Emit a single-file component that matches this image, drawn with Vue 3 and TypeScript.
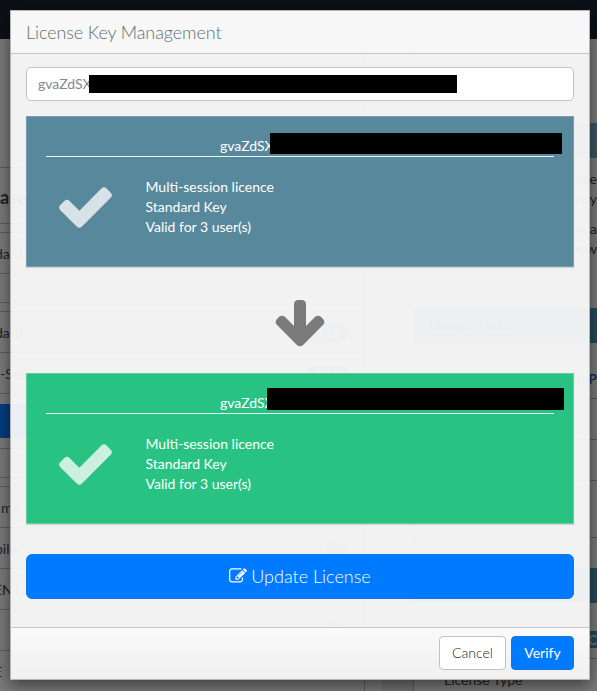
<script setup lang="ts">
interface LicenseCard { tone: string; keyText: string; details: string[] }
interface Row { text: string; height: number; shift: number; kind?: string; badge?: string }

const details = ['Multi-session licence', 'Standard Key', 'Valid for 3 user(s)']
const cards: LicenseCard[] = [
  { tone: 'blue', keyText: 'gvaZdSX', details },
  { tone: 'green', keyText: 'gvaZdSX', details },
]

const rows: Row[] = [
  { text: '', height: 13, shift: 0 },
  { text: 'ase', height: 56, shift: 0, kind: 'title' },
  { text: '', height: 9, shift: 0 },
  { text: 'dard', height: 41, shift: -5 },
  { text: '', height: 29, shift: 0 },
  { text: '', height: 9, shift: 0 },
  { text: 'dard', height: 41, shift: -5, badge: '7 / 10' },
  { text: '-Ses', height: 41, shift: 0, badge: '7 / 8' },
  { text: '', height: 55, shift: 0, kind: 'active' },
  { text: '', height: 29, shift: 0 },
  { text: '', height: 9, shift: 0 },
  { text: 'me', height: 41, shift: 1 },
  { text: 'piler', height: 41, shift: -5, badge: '✓' },
  { text: 'ENT', height: 41, shift: -6 },
  { text: '', height: 41, shift: 0, badge: '✓' },
  { text: 'E', height: 41, shift: -6 },
]
</script>

<template>
  <div class="screen">
    <div class="page">
      <div class="topbar"></div>
      <div class="columns">
        <div class="left">
          <div class="lead"></div>
          <div v-for="(r, i) in rows" :key="i" class="row" :class="r.kind" :style="{ height: r.height + 'px' }">
            <span :style="{ marginLeft: r.shift + 'px' }">{{ r.text }}</span>
            <b v-if="r.badge" :class="{ round: r.badge === '✓' }">{{ r.badge }}</b>
          </div>
        </div>
        <div class="gutter"></div>
        <div class="right">
          <div class="bar muted"></div>
          <div class="copy">
            <p>license</p>
            <p>your sy</p>
            <p class="gap">ase a</p>
            <p>are w</p>
          </div>
          <div class="bar">License Detail</div>
          <div class="cell key">auP</div>
          <div class="cell"></div>
          <div class="cell"></div>
          <div class="cell tall"></div>
          <div class="space"></div>
          <div class="bar"></div>
          <div class="cell status"><span>C</span></div>
          <div class="cell type">License Type</div>
        </div>
      </div>
    </div>

    <div class="backdrop"></div>

    <section class="modal" role="dialog">
      <header class="head">License Key Management</header>
      <main class="body">
        <div class="field">gvaZdSX<i class="mask"></i></div>
        <template v-for="(c, i) in cards" :key="c.tone">
          <article class="card" :class="c.tone">
            <div class="key-line">{{ c.keyText }}<i class="mask"></i></div>
            <div class="info">
              <svg class="check" viewBox="0 0 1792 1792"><path d="M1671 566q0 40-28 68l-724 724-136 136q-28 28-68 28t-68-28l-136-136-362-362q-28-28-28-68t28-68l136-136q28-28 68-28t68 28l294 295 656-657q28-28 68-28t68 28l136 136q28 28 28 68z" /></svg>
              <div class="details"><div v-for="d in c.details" :key="d">{{ d }}</div></div>
            </div>
          </article>
          <div v-if="i === 0" class="arrow">
            <svg viewBox="0 0 1792 1792"><path d="M1675 832q0 53-37 90l-651 652q-39 37-91 37-53 0-90-37l-651-652q-38-36-38-90 0-53 38-91l74-75q39-37 91-37 53 0 90 37l294 294v-704q0-52 38-90t90-38h128q52 0 90 38t38 90v704l294-294q37-37 90-37 52 0 91 37l75 75q37 39 37 91z" /></svg>
          </div>
        </template>
        <button class="update">
          <svg viewBox="0 0 1792 1792"><path d="M888 1184l116-116-152-152-116 116v56h96v96h56zm440-720q-16-16-33 1l-350 350q-17 17-1 33t33-1l350-350q17-17 1-33zm80 594v190q0 119-84.5 203.5t-203.5 84.5h-832q-119 0-203.5-84.5t-84.5-203.5v-832q0-119 84.5-203.5t203.5-84.5h832q63 0 117 25 15 7 18 23 3 17-9 29l-49 49q-14 14-32 8-23-6-45-6h-832q-66 0-113 47t-47 113v832q0 66 47 113t113 47h832q66 0 113-47t47-113v-126q0-13 9-22l64-64q15-15 35-7t20 29zm-96-738l288 288-672 672h-288v-288zm444 132l-92 92-288-288 92-92q28-28 68-28t68 28l152 152q28 28 28 68t-28 68z" /></svg>
          <span>Update License</span>
        </button>
      </main>
      <footer class="foot">
        <button class="btn">Cancel</button>
        <button class="btn primary">Verify</button>
      </footer>
    </section>
  </div>
</template>

<style>
body { overflow: hidden; }
</style>

<style scoped>
* { box-sizing: border-box; }
.screen {
  position: relative;
  width: 597px;
  height: 691px;
  overflow: hidden;
  font: 14px/20px Lato, "Liberation Sans", sans-serif;
}
.page { height: 691px; overflow: hidden; background: #f0f0f0; color: #444; }
.topbar { height: 39px; background: #16232e; }
.columns { display: flex; height: 652px; }
.left { flex: none; width: 365px; border-right: 1px solid #b4b4b4; background: #f3f3f3; }
.lead { height: 116px; }
.row {
  display: flex;
  align-items: center;
  justify-content: space-between;
  padding: 2px 16px 0 0;
  border-bottom: 1px solid #bdbdbd;
  white-space: nowrap;
}
.row.title { font-size: 18px; font-weight: 700; }
.row.active { background: linear-gradient(#007bff, #007bff) 0 10px / 100% 34px no-repeat; }
.row b {
  padding: 0 8px;
  border-radius: 9px;
  background: #4796b1;
  color: #fff;
  font-size: 12px;
  line-height: 18px;
}
.row b.round { width: 22px; padding: 0; text-align: center; line-height: 20px; border-radius: 11px; background: #8aa394; }
.gutter { flex: none; width: 48px; background: linear-gradient(90deg, #f3f3f3 17px, #e2e2e2 17px); }
.right { flex: 1; min-width: 0; padding-top: 84px; border-left: 1px solid #b4b4b4; background: #f3f3f3; }
.bar { height: 35px; padding: 0 15px; background: #4796b1; color: #20434f; font-weight: 700; line-height: 34px; }
.bar.muted { background: #79adc2; }
.copy { height: 150px; padding-top: 11px; text-align: right; white-space: nowrap; }
.copy p { margin: 0; }
.copy p.gap { margin-top: 10px; }
.cell { height: 41px; border-bottom: 1px solid #b0b0b0; }
.key { height: 56px; padding-top: 26px; text-align: right; color: #285fba; font-weight: 700; }
.cell.tall { height: 57px; }
.space { height: 30px; }
.status { height: 56px; padding: 28px 0 0 165px; }
.status span { display: block; height: 17px; background: #4796b1; color: #e4e4e4; font-weight: 700; line-height: 17px; text-align: right; }
.type { padding: 11px 0 0 30px; }
.backdrop { position: absolute; inset: 0; background: rgba(0, 0, 0, .5); }

.modal {
  position: absolute;
  left: 10px;
  top: 10px;
  width: 580px;
  height: 670px;
  display: flex;
  flex-direction: column;
  border: 1px solid #b5b5b5;
  background: rgba(250, 250, 250, .94);
  box-shadow: 0 5px 15px rgba(0, 0, 0, .5);
}
.head {
  height: 43px;
  padding: 0 15px;
  border-bottom: 1px solid #c3c5c5;
  background: #f7f7f7;
  color: #5f6e70;
  font-size: 18px;
  font-weight: 300;
  letter-spacing: -.1px;
  line-height: 43px;
}
.body { flex: 1; padding: 13px 15px 0; display: flex; flex-direction: column; }
.field {
  position: relative;
  height: 34px;
  padding: 0 11px;
  border: 1px solid #c2c4c6;
  border-radius: 5px;
  background: #fff;
  color: #85898c;
  line-height: 32px;
}
.mask { position: absolute; background: #000; }
.field .mask { left: 62px; top: 7px; width: 368px; height: 18px; }
.card {
  position: relative;
  height: 151px;
  padding: 20px;
  color: #fff;
  border: 1px solid;
  box-shadow: 0 1px 1px rgba(0, 0, 0, .12);
}
.blue { margin-top: 15px; background: #58889c; border-color: #7aa0b0; }
.green { background: #28c382; border-color: #61cf9f; }
.key-line { height: 20px; padding-left: 174px; border-bottom: 1px solid #e8f5f5; margin: 0 -1px; line-height: 17px; }
.blue .mask { left: 243px; top: 16px; width: 292px; height: 21px; }
.green .mask { left: 240px; top: 14px; width: 297px; height: 22px; }
.info { display: flex; padding: 20px 0 0 8px; }
.check { flex: none; width: 61px; height: 61px; margin-top: -1px; fill: #fff; opacity: .76; }
.details { margin-left: 29.5px; }
.arrow { height: 106px; padding-top: 29px; text-align: center; }
.arrow svg { width: 56px; height: 56px; margin-right: 1px; fill: #7b7b7b; }
button { font-family: inherit; font-weight: 300; }
.update {
  display: flex;
  align-items: center;
  justify-content: center;
  gap: 4px;
  height: 45px;
  margin-top: 30px;
  padding: 0 0 1px;
  border: 1px solid #1676e2;
  border-radius: 6px;
  background: #007bff;
  color: #fff;
  font-size: 18px;
}
.update svg { width: 18px; height: 18px; fill: #fff; }
.foot {
  height: 52px;
  padding: 8px 15px 0;
  display: flex;
  justify-content: flex-end;
  gap: 5px;
  border-top: 1px solid #c8c8c8;
  background: linear-gradient(#fafafa, #f0f0f0);
}
.btn {
  width: 67px;
  height: 34px;
  padding: 0 0 1px;
  border: 1px solid #c2c2c2;
  border-radius: 4px;
  background: #fff;
  color: #222;
  font-size: 14px;
}
.btn.primary { width: 63px; border-color: #1676e2; background: #007bff; color: #fff; font-weight: 400; }
</style>
